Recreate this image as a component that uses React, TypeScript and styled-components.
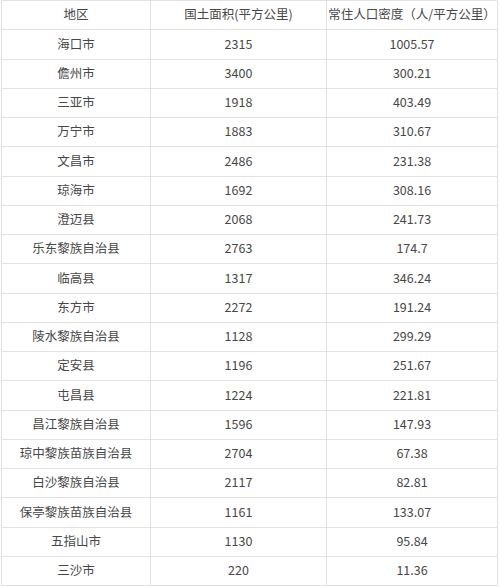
import React from "react";
import styled, { createGlobalStyle } from "styled-components";

const Global = createGlobalStyle`
  html, body { margin: 0; padding: 0; background: #fff; }
  body { font-family: "Noto Sans CJK SC", "Noto Sans", sans-serif; }
`;

const Grid = styled.div`
  margin-left: 1px;
  width: 496px;
  display: grid;
  grid-template-columns: 149px 176px 171px;
  grid-auto-rows: 29.25px;
  border-top: 1px solid #e2e2e2;
  border-left: 1px solid #e2e2e2;
  box-sizing: border-box;
  color: #474747;
  font-size: 12.5px;
`;

const Cell = styled.div`
  display: flex;
  align-items: center;
  justify-content: center;
  border-right: 1px solid #e2e2e2;
  border-bottom: 1px solid #e2e2e2;
  white-space: nowrap;
  line-height: 1;
  padding-bottom: 1px;
`;

const HeadCell = styled(Cell).attrs({ role: "columnheader" })``;

const rows: [string, string, string][] = [
  ["海口市", "2315", "1005.57"],
  ["儋州市", "3400", "300.21"],
  ["三亚市", "1918", "403.49"],
  ["万宁市", "1883", "310.67"],
  ["文昌市", "2486", "231.38"],
  ["琼海市", "1692", "308.16"],
  ["澄迈县", "2068", "241.73"],
  ["乐东黎族自治县", "2763", "174.7"],
  ["临高县", "1317", "346.24"],
  ["东方市", "2272", "191.24"],
  ["陵水黎族自治县", "1128", "299.29"],
  ["定安县", "1196", "251.67"],
  ["屯昌县", "1224", "221.81"],
  ["昌江黎族自治县", "1596", "147.93"],
  ["琼中黎族苗族自治县", "2704", "67.38"],
  ["白沙黎族自治县", "2117", "82.81"],
  ["保亭黎族苗族自治县", "1161", "133.07"],
  ["五指山市", "1130", "95.84"],
  ["三沙市", "220", "11.36"],
];

export default function App() {
  return (
    <>
      <Global />
      <Grid role="table">
        <HeadCell>地区</HeadCell>
        <HeadCell>国土面积(平方公里)</HeadCell>
        <HeadCell>常住人口密度（人/平方公里）</HeadCell>
        {rows.map((r) => (
          <React.Fragment key={r[0]}>
            <Cell>{r[0]}</Cell>
            <Cell>{r[1]}</Cell>
            <Cell>{r[2]}</Cell>
          </React.Fragment>
        ))}
      </Grid>
    </>
  );
}
